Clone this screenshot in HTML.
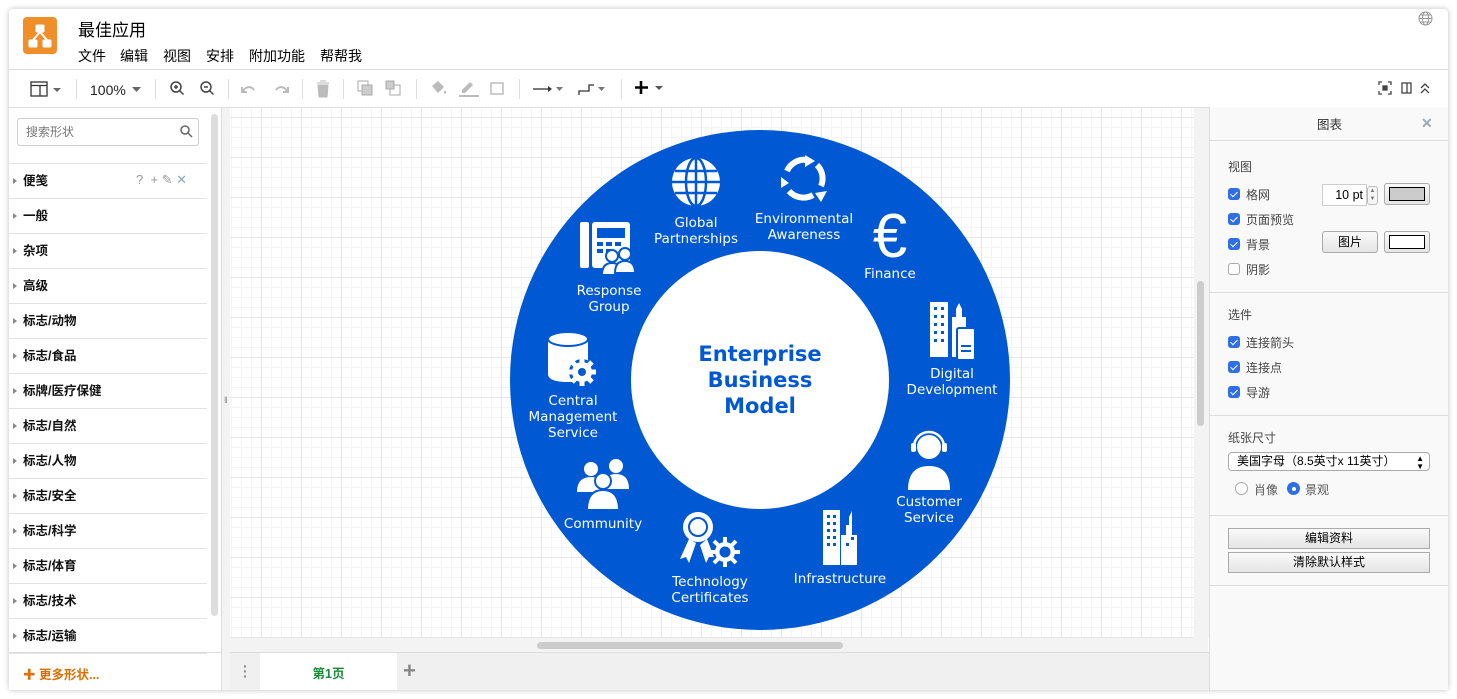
<!DOCTYPE html>
<html><head><meta charset="utf-8"><style>
*{box-sizing:border-box;margin:0;padding:0}
body{width:1457px;height:699px;background:#fff;font-family:"Liberation Sans","Noto Sans CJK SC",sans-serif;position:relative;overflow:hidden;font-size:12px;color:#000}
.a{position:absolute}
.win{left:9px;top:9px;width:1439px;height:681px;background:#fff;box-shadow:0 0 6px rgba(0,0,0,.25);border-radius:4px;overflow:hidden}
.menu span{position:absolute;top:0;font-size:14px;white-space:nowrap}
.side .it{position:absolute;left:0;width:198px;height:35px;border-bottom:1px solid #e2e2e2;font-size:12.5px;font-weight:bold;padding-left:14px;line-height:35px;color:#111}
.side .it:before{content:"";position:absolute;left:4px;top:14px;border-left:4px solid #888;border-top:3.5px solid transparent;border-bottom:3.5px solid transparent}
.grid{background-color:#fff;background-image:linear-gradient(#e6e6e6 1px,transparent 1px),linear-gradient(90deg,#e6e6e6 1px,transparent 1px),linear-gradient(#f4f4f4 1px,transparent 1px),linear-gradient(90deg,#f4f4f4 1px,transparent 1px);background-size:40px 40px,40px 40px,10px 10px,10px 10px;background-position:-1px 9px,-9px 0,-1px 9px,-9px 0}
.lbl{position:absolute;color:#fff;font-family:"DejaVu Sans",sans-serif;font-size:13.5px;text-align:center;line-height:16px;transform:translateX(-50%);white-space:nowrap}
.rp{left:1209px;top:107px;width:239px;height:583px;background:#f9f9f9;border-left:1px solid #ddd}
.cb{position:absolute;left:18px;width:12px;height:12px;border-radius:3px;background:#2f6fe6}
.cb:after{content:"";position:absolute;left:3.5px;top:1.5px;width:3px;height:6px;border:solid #fff;border-width:0 1.6px 1.6px 0;transform:rotate(45deg)}
.rl{position:absolute;left:36px;font-size:12px;color:#444}
.hd{position:absolute;left:18px;font-size:12px;color:#444}
.btn{position:absolute;border:1px solid #aaa;border-radius:3px;background:linear-gradient(#fafafa,#e4e4e4);font-size:12px;text-align:center}
.sep{position:absolute;top:79px;width:1px;height:20px;background:#ddd}
</style></head><body>
<div class="a win"></div>
<!-- header -->
<div class="a" style="left:23px;top:17px;width:34px;height:37px;background:#f08e2a;border-radius:4px"></div>
<svg class="a" style="left:23px;top:17px" width="34" height="37"><g fill="#fff" stroke="#fff"><rect x="13" y="8" width="8" height="7" rx="1"/><rect x="6" y="23" width="8" height="7" rx="1"/><rect x="20" y="23" width="8" height="7" rx="1"/><path d="M17 15 L10 23 M17 15 L24 23" stroke-width="2" fill="none"/></g></svg>
<div class="a" style="left:78px;top:16px;font-size:17px">最佳应用</div>
<div class="a menu" style="left:0;top:46px"><span style="left:78px">文件</span><span style="left:120px">编辑</span><span style="left:163px">视图</span><span style="left:206px">安排</span><span style="left:249px">附加功能</span><span style="left:320px">帮帮我</span></div>
<svg class="a" style="left:1418px;top:11px" width="15" height="15"><g fill="none" stroke="#999" stroke-width="1"><circle cx="7.5" cy="7.5" r="6.5"/><ellipse cx="7.5" cy="7.5" rx="3" ry="6.5"/><path d="M1 7.5h13M2 4h11M2 11h11"/></g></svg>
<div class="a" style="left:9px;top:69px;width:1439px;height:1px;background:#ddd"></div>
<!-- toolbar -->
<svg class="a" style="left:30px;top:81px" width="40" height="16"><rect x="1" y="1" width="16" height="14" fill="none" stroke="#333" stroke-width="1.3"/><path d="M1 4.5h16M10 4.5v10" stroke="#333" stroke-width="1.3"/><path d="M23 7h8l-4 4z" fill="#666"/></svg>
<div class="sep" style="left:76px"></div>
<div class="a" style="left:90px;top:82px;font-size:14px;color:#222">100%</div>
<svg class="a" style="left:132px;top:87px" width="10" height="6"><path d="M0 0h9l-4.5 5z" fill="#666"/></svg>
<div class="sep" style="left:155px"></div>
<svg class="a" style="left:168px;top:80px" width="50" height="18"><g fill="none" stroke="#444" stroke-width="1.5"><circle cx="8" cy="7" r="5"/><path d="M11.5 10.5l4 4M6 7h4M8 5v4"/><circle cx="38" cy="7" r="5"/><path d="M41.5 10.5l4 4M36 7h4"/></g></svg>
<div class="sep" style="left:228px"></div>
<svg class="a" style="left:240px;top:81px" width="50" height="16"><g fill="none" stroke="#bbb" stroke-width="2"><path d="M3 11a6 6 0 0 1 11-2M2 6v5h5"/><path d="M47 11a6 6 0 0 0-11-2M48 6v5h-5"/></g></svg>
<div class="sep" style="left:302px"></div>
<svg class="a" style="left:315px;top:80px" width="16" height="18"><path d="M2 3h12M5 1h6M3 5h10l-1 12H4z" fill="#bbb" stroke="#bbb"/></svg>
<div class="sep" style="left:343px"></div>
<svg class="a" style="left:357px;top:80px" width="50" height="18"><g fill="#ccc" stroke="#aaa"><rect x="1" y="1" width="10" height="10" fill="none"/><rect x="5" y="5" width="10" height="10"/><rect x="33" y="5" width="10" height="10" fill="none"/><rect x="29" y="1" width="8" height="8"/></g></svg>
<div class="sep" style="left:416px"></div>
<svg class="a" style="left:430px;top:80px" width="80" height="18"><g fill="#bbb"><path d="M2 6l6-5 6 6-6 6z"/><path d="M15 10q2 3 0 4q-2-1 0-4z"/><path d="M40 2l3 3-8 8h-3v-3z"/><rect x="29" y="15" width="20" height="2"/><rect x="61" y="3" width="12" height="11" fill="none" stroke="#bbb" stroke-width="1.5"/></g></svg>
<div class="sep" style="left:519px"></div>
<svg class="a" style="left:532px;top:82px" width="100" height="16"><path d="M1 7h16" stroke="#333" stroke-width="1.3"/><path d="M16 4l4 3-4 3z" fill="#333"/><path d="M24 5h7l-3.5 4z" fill="#777"/><path d="M47 13v-4h10v-6h5" fill="none" stroke="#333" stroke-width="1.3"/><path d="M66 5h7l-3.5 4z" fill="#777"/></svg>
<div class="sep" style="left:621px"></div>
<svg class="a" style="left:634px;top:80px" width="32" height="16"><path d="M7 1v13M1 7.5h13" stroke="#000" stroke-width="2.6"/><path d="M21 6h8l-4 4z" fill="#555"/></svg>
<svg class="a" style="left:1378px;top:81px" width="60" height="14"><g fill="none" stroke="#444" stroke-width="1.3"><path d="M1 4V1h3M10 1h3v3M13 10v3h-3M4 13H1v-3"/><rect x="5" y="5" width="4" height="4" fill="#444"/><rect x="24" y="2" width="9" height="10"/><path d="M29 2v10"/><path d="M43 7l4-4 4 4M43 12l4-4 4 4"/></g></svg>
<div class="a" style="left:9px;top:107px;width:1439px;height:1px;background:#ddd"></div>
<!-- sidebar -->
<div class="a side" style="left:9px;top:108px;width:212px;height:582px;background:#fff">
  <div class="a" style="left:8px;top:10px;width:182px;height:28px;border:1px solid #ccc;border-radius:3px;color:#777;font-size:12px;line-height:26px;padding-left:8px">搜索形状</div>
  <svg class="a" style="left:171px;top:17px" width="13" height="13"><circle cx="5" cy="5" r="4" fill="none" stroke="#666" stroke-width="1.5"/><path d="M8 8l4 4" stroke="#666" stroke-width="1.5"/></svg>
  <div class="a" style="left:0;top:55px;width:198px;height:1px;background:#e2e2e2"></div>
  <div class="it" style="top:56px">便笺</div>
  <div class="a" style="left:127px;top:64px;color:#999;font-size:13px">?&nbsp; + ✎ <span style="color:#8ab">✕</span></div>
  <div class="it" style="top:91px">一般</div>
  <div class="it" style="top:126px">杂项</div>
  <div class="it" style="top:161px">高级</div>
  <div class="it" style="top:196px">标志/动物</div>
  <div class="it" style="top:231px">标志/食品</div>
  <div class="it" style="top:266px">标牌/医疗保健</div>
  <div class="it" style="top:301px">标志/自然</div>
  <div class="it" style="top:336px">标志/人物</div>
  <div class="it" style="top:371px">标志/安全</div>
  <div class="it" style="top:406px">标志/科学</div>
  <div class="it" style="top:441px">标志/体育</div>
  <div class="it" style="top:476px">标志/技术</div>
  <div class="it" style="top:511px">标志/运输</div>
  <div class="a" style="left:202px;top:6px;width:7px;height:502px;background:#ddd;border-radius:4px"></div>
  <div class="a" style="left:0;top:544px;width:212px;height:1px;background:#ddd"></div>
  <div class="a" style="left:14px;top:556px;color:#e06d00;font-weight:bold;font-size:12.5px">✚ 更多形状...</div>
</div>
<div class="a" style="left:221px;top:108px;width:9px;height:582px;background:#f3f3f3;border-left:1px solid #ddd"></div>
<div class="a" style="left:224px;top:395px;color:#888;font-size:9px">‖</div>
<!-- canvas -->
<div class="a grid" style="left:230px;top:108px;width:964px;height:530px"></div>
<div class="a" style="left:230px;top:638px;width:978px;height:14px;background:#f3f3f3"></div>
<div class="a" style="left:537px;top:642px;width:306px;height:7px;background:#ccc;border-radius:4px"></div>
<div class="a" style="left:1194px;top:108px;width:15px;height:530px;background:#f3f3f3"></div>
<div class="a" style="left:1197px;top:281px;width:7px;height:145px;background:#ccc;border-radius:4px"></div>
<!-- tabs -->
<div class="a" style="left:230px;top:652px;width:979px;height:38px;background:#f0f0f0;border-top:1px solid #ddd"></div>
<div class="a" style="left:243px;top:664px;color:#888;font-weight:bold;font-size:14px;line-height:5px">·<br>·<br>·</div>
<div class="a" style="left:260px;top:653px;width:137px;height:37px;background:#fff;color:#1a8a3a;font-weight:bold;font-size:12.5px;text-align:center;line-height:42px">第1页</div>
<div class="a" style="left:403px;top:658px;color:#888;font-size:22px;font-weight:bold">+</div>
<!-- diagram -->
<svg class="a" style="left:505px;top:125px" width="510" height="510">
  <circle cx="255" cy="255" r="250" fill="#0059d2"/>
  <circle cx="255" cy="255" r="129" fill="#fff"/>
  <g fill="#fff">
    <g transform="translate(191,57)"><circle cx="0" cy="0" r="24"/><g fill="none" stroke="#0059d2" stroke-width="2.5"><ellipse cx="0" cy="0" rx="10" ry="24"/><path d="M0-24v48M-24 0h48M-21-11h42M-21 11h42"/></g></g>
    <g transform="translate(299,54)" fill="none" stroke="#fff" stroke-width="6"><path d="M-17-8a19 19 0 0 1 20-11"/><path d="M13-14a19 19 0 0 1 4 21"/><path d="M9 16a19 19 0 0 1-24-4"/></g>
    <path d="M300 30l10 6-10 6z M322 66l-12 2 6 9z M276 52l0 11 8-5z"/>
    <text x="385" y="132" font-size="62" font-family="Liberation Sans" text-anchor="middle" fill="#fff">€</text>
    <rect x="75" y="97" width="9" height="46" rx="2"/><rect x="87" y="97" width="38" height="46" rx="3"/>
    <rect x="92" y="103" width="28" height="10" fill="#0059d2"/>
    <g fill="#0059d2"><rect x="92" y="117" width="6" height="4"/><rect x="101" y="117" width="6" height="4"/><rect x="110" y="117" width="6" height="4"/><rect x="92" y="124" width="6" height="4"/><rect x="101" y="124" width="6" height="4"/></g>
    <circle cx="107" cy="131" r="6" stroke="#0059d2" stroke-width="2"/><path d="M97 150q0-12 10-12q10 0 10 12z" stroke="#0059d2" stroke-width="2"/>
    <circle cx="120" cy="129" r="6" stroke="#0059d2" stroke-width="2"/><path d="M110 148q0-12 10-12q10 0 10 12z" stroke="#0059d2" stroke-width="2"/>
    <rect x="425" y="177" width="18" height="55"/><path d="M447 232v-40h4v-8l3-6 3 6v8h4v40z"/><rect x="452" y="203" width="18" height="32" rx="2" stroke="#0059d2" stroke-width="2"/>
    <g fill="#0059d2"><rect x="429" y="182" width="3" height="3"/><rect x="436" y="182" width="3" height="3"/><rect x="429" y="190" width="3" height="3"/><rect x="436" y="190" width="3" height="3"/><rect x="429" y="198" width="3" height="3"/><rect x="436" y="198" width="3" height="3"/><rect x="429" y="206" width="3" height="3"/><rect x="436" y="206" width="3" height="3"/><rect x="429" y="214" width="3" height="3"/><rect x="436" y="214" width="3" height="3"/><rect x="456" y="220" width="10" height="2"/><rect x="456" y="225" width="10" height="2"/></g>
    <path d="M43 215v34q0 8 20 8t20-8v-34z"/><ellipse cx="63" cy="214" rx="20" ry="7" stroke="#0059d2" stroke-width="2"/>
    <g transform="translate(77,247)"><circle r="13" fill="#0059d2"/><circle r="10"/><g stroke="#fff" stroke-width="5"><path d="M0-14v28M-14 0h28M-10-10l20 20M10-10l-20 20"/></g><circle r="4" fill="#0059d2"/></g>
    <circle cx="424" cy="322" r="12"/><path d="M403 365q0-24 21-24q21 0 21 24z"/>
    <path d="M409 322a15 15 0 0 1 30 0" fill="none" stroke="#fff" stroke-width="2.5"/><rect x="406" y="318" width="5" height="9" rx="2"/><rect x="437" y="318" width="5" height="9" rx="2"/>
    <circle cx="86" cy="344" r="7"/><circle cx="111" cy="341" r="7"/><path d="M72 367q0-15 14-15q14 0 14 15zM98 364q0-15 13-15q13 0 13 15z"/>
    <circle cx="98" cy="356" r="8" stroke="#0059d2" stroke-width="2"/><path d="M82 385q0-20 16-20q16 0 16 20z" stroke="#0059d2" stroke-width="2"/>
    <circle cx="193" cy="402" r="15"/><circle cx="193" cy="402" r="9" fill="none" stroke="#0059d2" stroke-width="2"/>
    <path d="M184 414l-9 20 6-2 3 6 7-20zM202 414l7 18-5 0-3 6-6-18z"/>
    <g transform="translate(220,427)"><g stroke="#fff" stroke-width="4"><path d="M0-15v30M-15 0h30M-11-11l22 22M11-11l-22 22"/></g><circle r="10" fill="#fff"/><circle r="5.5" fill="#0059d2"/></g>
    <rect x="318" y="385" width="17" height="55"/><path d="M336 440v-30h5v-10h3v-8l3-6v24h5v30z"/>
    <g fill="#0059d2"><rect x="322" y="390" width="3" height="3"/><rect x="328" y="390" width="3" height="3"/><rect x="322" y="397" width="3" height="3"/><rect x="328" y="397" width="3" height="3"/><rect x="322" y="404" width="3" height="3"/><rect x="328" y="404" width="3" height="3"/><rect x="322" y="411" width="3" height="3"/><rect x="328" y="411" width="3" height="3"/><rect x="322" y="418" width="3" height="3"/><rect x="328" y="418" width="3" height="3"/><rect x="341" y="418" width="3" height="3"/><rect x="346" y="412" width="3" height="3"/></g>
  </g>
</svg>
<div class="lbl" style="left:696px;top:215px">Global<br>Partnerships</div>
<div class="lbl" style="left:804px;top:211px">Environmental<br>Awareness</div>
<div class="lbl" style="left:890px;top:266px">Finance</div>
<div class="lbl" style="left:609px;top:283px">Response<br>Group</div>
<div class="lbl" style="left:952px;top:366px">Digital<br>Development</div>
<div class="lbl" style="left:573px;top:393px">Central<br>Management<br>Service</div>
<div class="lbl" style="left:929px;top:494px">Customer<br>Service</div>
<div class="lbl" style="left:603px;top:516px">Community</div>
<div class="lbl" style="left:840px;top:571px">Infrastructure</div>
<div class="lbl" style="left:710px;top:574px">Technology<br>Certificates</div>
<div class="a" style="left:760px;top:341px;transform:translateX(-50%);color:#0059d2;font-family:'DejaVu Sans',sans-serif;font-weight:bold;font-size:21px;line-height:26px;text-align:center;white-space:nowrap">Enterprise<br>Business<br>Model</div>
<!-- right panel -->
<div class="a rp">
  <div class="a" style="left:0;top:0;width:239px;height:34px;border-bottom:1px solid #ddd;text-align:center;line-height:36px;font-size:12.5px;color:#333">图表</div>
  <div class="a" style="left:211px;top:8px;color:#9ab;font-size:14px;font-weight:bold">✕</div>
  <div class="hd" style="top:51px">视图</div>
  <div class="cb" style="top:81px"></div><div class="rl" style="top:79px">格网</div>
  <div class="cb" style="top:106px"></div><div class="rl" style="top:104px">页面预览</div>
  <div class="cb" style="top:131px"></div><div class="rl" style="top:129px">背景</div>
  <div class="cb" style="top:156px;background:#fff;border:1px solid #aaa"></div><div class="rl" style="top:154px">阴影</div>
  <div class="a" style="left:112px;top:77px;width:45px;height:22px;border:1px solid #ccc;background:#fff;text-align:right;padding-right:3px;line-height:20px;font-size:12.5px">10 pt</div>
  <div class="a" style="left:157px;top:79px;width:11px;height:19px;border:1px solid #bbb;border-radius:3px;background:#f5f5f5;font-size:6px;color:#777;text-align:center;line-height:8px">▲<br>▼</div>
  <div class="btn" style="left:174px;top:76px;width:46px;height:22px"><div style="margin:3px 4px;height:14px;background:#ccc;border:1px solid #000"></div></div>
  <div class="btn" style="left:112px;top:124px;width:56px;height:22px;line-height:20px">图片</div>
  <div class="btn" style="left:174px;top:124px;width:46px;height:22px"><div style="margin:3px 4px;height:14px;background:#fff;border:1px solid #000"></div></div>
  <div class="a" style="left:0;top:185px;width:239px;height:1px;background:#ddd"></div>
  <div class="hd" style="top:199px">选件</div>
  <div class="cb" style="top:229px"></div><div class="rl" style="top:227px">连接箭头</div>
  <div class="cb" style="top:254px"></div><div class="rl" style="top:252px">连接点</div>
  <div class="cb" style="top:279px"></div><div class="rl" style="top:277px">导游</div>
  <div class="a" style="left:0;top:308px;width:239px;height:1px;background:#ddd"></div>
  <div class="hd" style="top:322px">纸张尺寸</div>
  <div class="a" style="left:18px;top:345px;width:202px;height:19px;border:1px solid #aaa;border-radius:4px;background:#fff;font-size:12px;line-height:17px;padding-left:8px">美国字母（8.5英寸x 11英寸）<span style="position:absolute;right:5px;font-size:8px;line-height:8px;top:2px">▲<br>▼</span></div>
  <div class="a" style="left:25px;top:375px;width:13px;height:13px;border-radius:50%;border:1px solid #aaa;background:#fff"></div>
  <div class="a" style="left:44px;top:374px;color:#555">肖像</div>
  <div class="a" style="left:77px;top:375px;width:13px;height:13px;border-radius:50%;background:#2f6fe6"><div style="margin:4.5px;width:4px;height:4px;border-radius:50%;background:#fff"></div></div>
  <div class="a" style="left:95px;top:374px;color:#555">景观</div>
  <div class="a" style="left:0;top:408px;width:239px;height:1px;background:#ddd"></div>
  <div class="btn" style="left:18px;top:421px;width:202px;height:21px;border-radius:0;line-height:19px">编辑资料</div>
  <div class="btn" style="left:18px;top:445px;width:202px;height:21px;border-radius:0;line-height:19px">清除默认样式</div>
  <div class="a" style="left:0;top:478px;width:239px;height:1px;background:#ddd"></div>
</div>
</body></html>
